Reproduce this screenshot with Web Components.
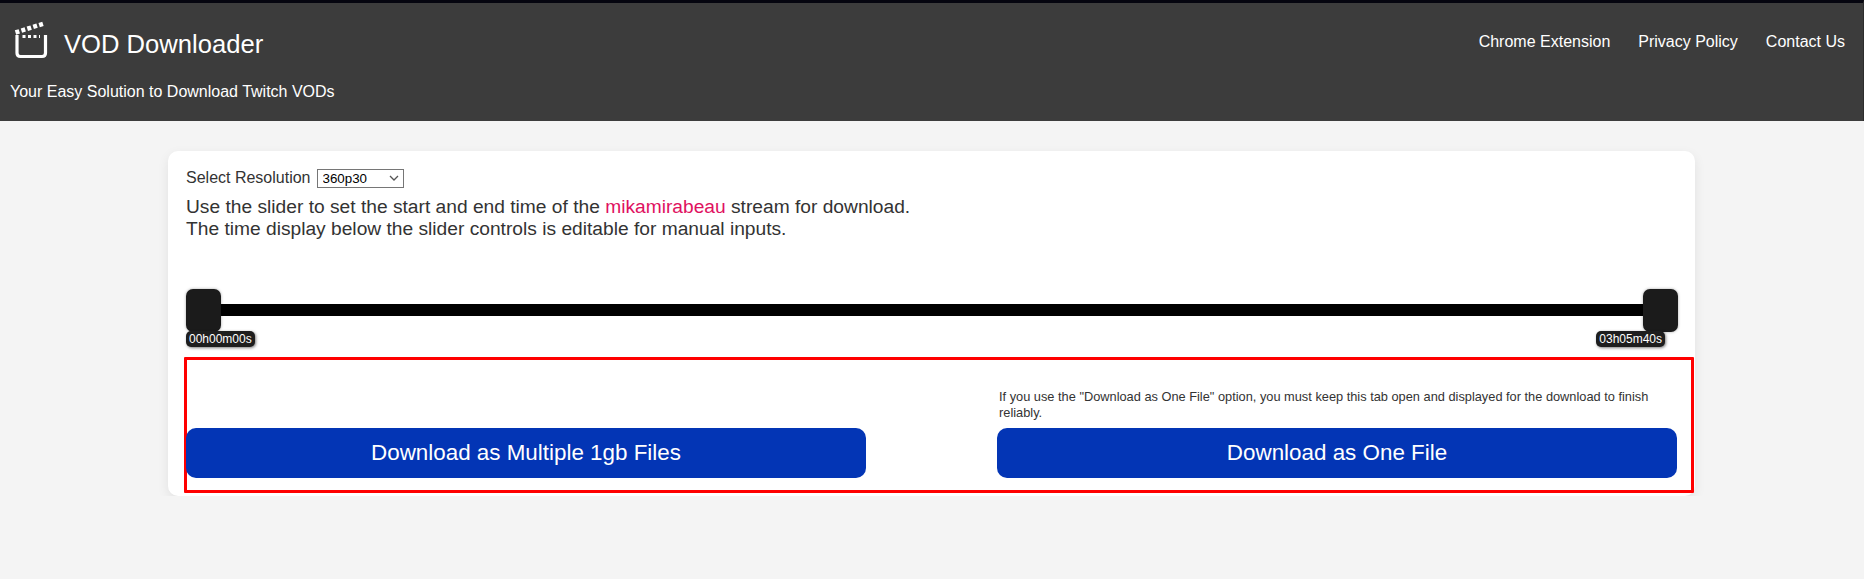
<!DOCTYPE html>
<html lang="en"><head><meta charset="utf-8"><title>VOD Downloader</title>
<style>
html,body{margin:0;padding:0;background:#f4f4f4;font-family:"Liberation Sans",Arial,sans-serif;color:#333}
</style></head><body>
<vod-header></vod-header>
<vod-card>
  <res-select slot="sel"></res-select>
  <p slot="intro">Use the slider to set the start and end time of the <span style="color:#e0115f">mikamirabeau</span> stream for download.<br>The time display below the slider controls is editable for manual inputs.</p>
  <time-slider start="00h00m00s" end="03h05m40s"></time-slider>
  <download-row></download-row>
</vod-card>
<script>
function def(name,html,setup){customElements.define(name,class extends HTMLElement{
  connectedCallback(){if(this.shadowRoot)return;const r=this.attachShadow({mode:'open'});r.innerHTML=html;if(setup)setup.call(this,r)}
})}
def('vod-header',`<style>
:host{display:flex;justify-content:space-between;height:118px;background:#3c3c3c;border-top:3px solid #05050f;border-right:1px solid #2c2c2c;color:#fff;font:16px "Liberation Sans",Arial,sans-serif}
.l{display:flex;flex-direction:column;padding-left:10px}
.brand{display:flex;align-items:center;height:52px;padding-top:12px;gap:15px}
svg{display:block;width:36px;height:42px;margin-left:3px;margin-top:-4px}
h1{font-size:25.6px;font-weight:400;margin:6px 0 0;line-height:30px}
.tag{margin-top:16px;line-height:18px}
nav{display:flex;gap:28px;padding:30px 18px 0 0;line-height:18px;align-items:flex-start}
a{color:#fff;text-decoration:none}
</style>
<div class="l"><div class="brand">
<svg viewBox="0 0 36 42" fill="none" stroke="#fff"><path d="M2.500 14.500 L31 5.500" stroke-width="4.500" stroke-dasharray="4 2.200"/><path d="M4 17 V35 Q4 38.500 7.500 38.500 H29 Q32.500 38.500 32.500 35 V17" stroke-width="3.200"/><path d="M9.500 18.500 H27" stroke-width="3.200" stroke-dasharray="3 2.500"/></svg>
<h1>VOD Downloader</h1></div>
<div class="tag">Your Easy Solution to Download Twitch VODs</div></div>
<nav><a href="#">Chrome Extension</a><a href="#">Privacy Policy</a><a href="#">Contact Us</a></nav>`);
def('vod-card',`<style>
:host{display:block;box-sizing:border-box;width:1527px;height:345px;margin:30px 0 0 168px;padding:18px 0 0 18px;background:#fff;border-radius:10px;box-shadow:0 4px 12px rgba(0,0,0,.08)}
::slotted(p){margin:0;font-size:19.2px;line-height:22px;color:#333}
</style><slot name="sel"></slot><slot name="intro"></slot><slot></slot>`);
def('res-select',`<style>
:host{display:flex;align-items:center;height:19px;gap:6px;margin-bottom:8px;font:16px "Liberation Sans",Arial,sans-serif;color:#333}
span{margin-top:-1px}
.w{position:relative;display:block;width:87px;height:19px}
select{appearance:none;-webkit-appearance:none;display:block;box-sizing:border-box;width:87px;height:19px;font:13.33px "Liberation Sans",Arial,sans-serif;background:#fff;color:#000;border:1px solid #767676;border-radius:0;padding:0 0 0 5px;margin:0}
svg{position:absolute;right:5px;top:6px;width:10px;height:7px;pointer-events:none}
</style><span>Select Resolution</span><div class="w"><select><option>360p30</option><option>480p30</option><option>720p60</option></select><svg viewBox="0 0 10 7" fill="none" stroke="#555" stroke-width="1.300"><path d="M1 1 L5 5 L9 1"/></svg></div>`);
def('time-slider',`<style>
:host{display:block;position:relative;width:1491px;height:12px;margin-top:64px;background:#000;font:12px "Liberation Sans",Arial,sans-serif}
.t{position:absolute;top:-15px;width:35px;height:43px;background:#1b1b1b;border-radius:7px;box-shadow:0 0 3px rgba(0,0,0,.35)}
.a{left:0}.b{right:-1px}
.v{position:absolute;top:27px;height:16px;line-height:16px;padding:0 3px;background:#1e1e1e;color:#fff;border-radius:5px;box-shadow:1px 1px 3px rgba(0,0,0,.5);white-space:nowrap}
.va{left:0}.vb{right:12px}
</style><div class="t a"></div><div class="t b"></div><div class="v va"></div><div class="v vb"></div>`,function(r){
  r.querySelector('.va').textContent=this.getAttribute('start');r.querySelector('.vb').textContent=this.getAttribute('end');
});
def('download-row',`<style>
:host{display:flex;justify-content:space-between;box-sizing:border-box;width:1510px;height:136px;margin:41px 0 0 -2px;padding:0 14px 12px 0;border:3px solid #f00;border-radius:1px;font:16px "Liberation Sans",Arial,sans-serif}
.c{display:flex;flex-direction:column;justify-content:flex-end;width:680px}
.c:first-of-type{margin-left:-1px}
p{margin:0 0 7px;padding:0 2px;font-size:12.8px;line-height:16px;color:#333}
button{display:block;width:100%;height:50px;border:0;border-radius:10px;background:#0335b5;color:#fff;font:22.4px "Liberation Sans",Arial,sans-serif;padding:0}
</style><div class="c"><button>Download as Multiple 1gb Files</button></div>
<div class="c"><p>If you use the "Download as One File" option, you must keep this tab open and displayed for the download to finish reliably.</p><button>Download as One File</button></div>`);
</script>
</body></html>
